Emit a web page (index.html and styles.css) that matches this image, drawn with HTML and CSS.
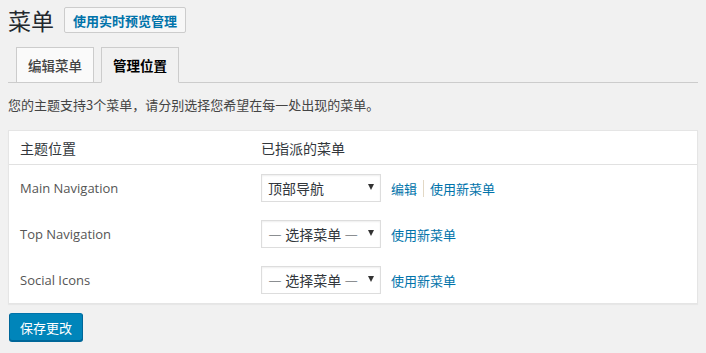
FILE: index.html
```html
<!DOCTYPE html>
<html lang="zh-CN">
<head>
<meta charset="utf-8">
<title>菜单</title>
<link rel="stylesheet" href="styles.css">
</head>
<body>
<div class="wrap">
  <div class="header">
    <h1 class="title">菜单</h1>
    <a class="page-action">使用实时预览管理</a>
  </div>
  <div class="tabs">
    <a class="tab">编辑菜单</a>
    <a class="tab tab-active">管理位置</a>
  </div>
  <p class="desc">您的主题支持3个菜单，请分别选择您希望在每一处出现的菜单。</p>
  <div class="table">
    <div class="row head">
      <div class="c1">主题位置</div>
      <div class="c2">已指派的菜单</div>
    </div>
    <div class="row">
      <div class="c1 latin">Main Navigation</div>
      <div class="c2">
        <div class="select"><span class="sel-text">顶部导航</span><span class="arrow"></span></div>
        <a class="link">编辑</a><span class="sep"></span><a class="link">使用新菜单</a>
      </div>
    </div>
    <div class="row">
      <div class="c1 latin">Top Navigation</div>
      <div class="c2">
        <div class="select"><span class="sel-text">— 选择菜单 —</span><span class="arrow"></span></div>
        <a class="link">使用新菜单</a>
      </div>
    </div>
    <div class="row">
      <div class="c1 latin">Social Icons</div>
      <div class="c2">
        <div class="select"><span class="sel-text">— 选择菜单 —</span><span class="arrow"></span></div>
        <a class="link">使用新菜单</a>
      </div>
    </div>
  </div>
  <button class="primary">保存更改</button>
</div>
</body>
</html>
```
FILE: styles.css
```css
html, body {
  margin: 0;
  padding: 0;
  background: #f1f1f1;
}
body {
  font-family: "Open Sans", "Noto Sans CJK SC", sans-serif;
  font-size: 13px;
  color: #444;
  width: 706px;
  height: 353px;
  overflow: hidden;
}
.wrap {
  padding: 7px 8px 0 8px;
}
.header {
  display: flex;
  align-items: center;
  height: 26px;
}
.title {
  margin: 0;
  font-family: "Noto Sans CJK SC", sans-serif;
  font-size: 23px;
  font-weight: 400;
  color: #23282d;
  line-height: 26px;
  margin-right: 10px;
}
.page-action {
  display: inline-flex;
  align-items: center;
  box-sizing: border-box;
  height: 26px;
  padding: 0 8px;
  border: 1px solid #ccc;
  border-radius: 2px;
  background: #f7f7f7;
  color: #0073aa;
  font-family: "Noto Sans CJK SC", sans-serif;
  font-size: 13px;
  font-weight: 700;
}
.tabs {
  display: flex;
  margin-top: 14px;
  padding-left: 8px;
  border-bottom: 1px solid #ccc;
}
.tab {
  box-sizing: border-box;
  width: 78px;
  height: 36px;
  margin-bottom: -1px;
  margin-right: 7px;
  display: flex;
  align-items: center;
  justify-content: center;
  border: 1px solid #ccc;
  background: #fafafa;
  font-family: "Noto Sans CJK SC", sans-serif;
  font-size: 13.5px;
  font-weight: 500;
  color: #444;
}
.tab-active {
  background: #f1f1f1;
  border-bottom-color: #f1f1f1;
  color: #000;
  font-weight: 700;
}
.desc {
  margin: 13px 0 0 0;
  height: 17px;
  line-height: 17px;
  font-family: "Noto Sans CJK SC", sans-serif;
  font-size: 13px;
  color: #444;
}
.table {
  margin-top: 17px;
  background: #fff;
  border: 1px solid #e5e5e5;
  box-shadow: 0 1px 1px rgba(0,0,0,.04);
}
.row {
  display: flex;
  align-items: center;
  height: 46px;
}
.row.head {
  height: 33px;
  border-bottom: 1px solid #e1e1e1;
}
.c1 {
  width: 241px;
  padding-left: 11px;
  font-family: "Noto Sans CJK SC", sans-serif;
  font-size: 13px;
  color: #32373c;
}
.c1.latin {
  font-family: "Open Sans", "Noto Sans CJK SC", sans-serif;
  color: #555;
}
.head .c1, .head .c2 {
  color: #32373c;
  font-size: 14px;
}
.c2 {
  display: flex;
  align-items: center;
  font-family: "Noto Sans CJK SC", sans-serif;
  font-size: 13px;
}
.select {
  box-sizing: border-box;
  width: 120px;
  height: 28px;
  border: 1px solid #ddd;
  box-shadow: inset 0 1px 2px rgba(0,0,0,.07);
  background: #fff;
  display: flex;
  align-items: center;
  justify-content: space-between;
  padding: 0 6px 0 6px;
  margin-right: 10px;
  font-size: 14px;
  color: #32373c;
}
.arrow {
  width: 0;
  height: 0;
  border-left: 3px solid transparent;
  border-right: 3px solid transparent;
  border-top: 6px solid #333;
  margin-top: -2px;
}
.link {
  color: #0073aa;
  font-size: 13px;
}
.sep {
  width: 1px;
  height: 17px;
  background: #e2d8c5;
  margin: 0 6px;
}
.primary {
  margin-top: 9px;
  margin-left: 1px;
  box-sizing: border-box;
  height: 28px;
  padding: 0 10px;
  background: #0085ba;
  border: 1px solid;
  border-color: #0073aa #006799 #006799;
  border-radius: 3px;
  box-shadow: 0 1px 0 #006799;
  color: #fff;
  font-family: "Noto Sans CJK SC", sans-serif;
  font-size: 13px;
}
```
